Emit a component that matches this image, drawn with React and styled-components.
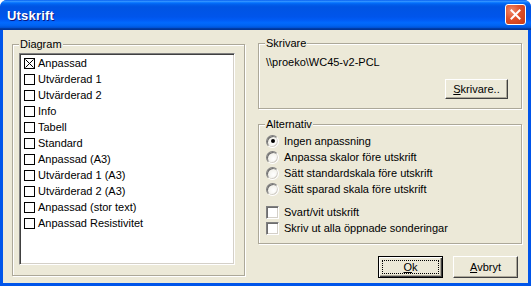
import React from "react";
import styled, { createGlobalStyle } from "styled-components";

const GlobalStyle = createGlobalStyle`
  html, body {
    margin: 0;
    padding: 0;
    background: #ffffff;
    overflow: hidden;
  }
  body {
    font-family: "Liberation Sans", Arial, sans-serif;
    font-size: 11px;
    color: #000;
  }
`;

const Window = styled.div`
  width: 531px;
  height: 286px;
  display: flex;
  flex-direction: column;
  box-sizing: border-box;
  background: #0055ea;
  border-radius: 7px 7px 0 0;
  overflow: hidden;
`;

const TitleBar = styled.div`
  height: 30px;
  flex: none;
  display: flex;
  align-items: center;
  justify-content: space-between;
  padding: 0 5px 0 7px;
  background: linear-gradient(
    to bottom,
    #0058ee 0%,
    #3593ff 4%,
    #288eff 6%,
    #127dff 8%,
    #036ffc 10%,
    #0262ee 14%,
    #0057e5 20%,
    #0054e3 24%,
    #0055eb 56%,
    #005bf5 66%,
    #026afe 76%,
    #0062ef 86%,
    #0052d6 92%,
    #0040ab 94%,
    #003092 100%
  );
`;

const Title = styled.span`
  font-family: "Liberation Sans", Arial, sans-serif;
  font-weight: bold;
  font-size: 13px;
  color: #fff;
  text-shadow: 1px 1px 0 #0a1883;
  letter-spacing: 0.2px;
`;

const CloseButton = styled.div`
  width: 21px;
  height: 21px;
  box-sizing: border-box;
  border: 1px solid #fff;
  border-radius: 3px;
  background: radial-gradient(circle at 30% 30%, #f08a6c 0%, #e0502a 45%, #c63a14 100%);
  display: flex;
  align-items: center;
  justify-content: center;
  margin-top: -1px;
`;

const Body = styled.div`
  flex: 1;
  margin: 0 3px 3px 3px;
  background: #ece9d8;
  display: flex;
  gap: 13px;
  padding: 14px 6px 0 9px;
  box-sizing: border-box;
`;

const Group = styled.div`
  position: relative;
  box-sizing: border-box;
  width: ${(p) => p.$width}px;
  height: ${(p) => p.$height}px;
  margin-top: ${(p) => p.$top || 0}px;
  border: 1px solid #aca899;
  box-shadow: inset 1px 1px 0 #fff, 1px 1px 0 #fff;
  display: flex;
  flex-direction: column;
  padding: ${(p) => p.$pad || "0"};
`;

const Legend = styled.span`
  position: absolute;
  top: -7px;
  left: 6px;
  padding: 0 1px;
  line-height: 13px;
  background: #ece9d8;
`;

const ListBox = styled.div`
  flex: 1;
  background: #fff;
  border-style: solid;
  border-width: 1px;
  border-color: #808080 #fff #fff #808080;
  box-shadow: inset 1px 1px 0 #404040, inset -1px -1px 0 #d4d0c8;
  padding: 1px 2px;
  display: flex;
  flex-direction: column;
`;

const ListRow = styled.div`
  height: 16px;
  display: flex;
  align-items: center;
  gap: 3px;
  padding-left: 2px;
  white-space: nowrap;
`;

const FlatCheck = styled.span`
  width: 11px;
  height: 11px;
  box-sizing: border-box;
  border: 1px solid #000;
  background: #fff;
  display: inline-flex;
  flex: none;
`;

const RightColumn = styled.div`
  display: flex;
  flex-direction: column;
  width: 264px;
`;

const PrinterName = styled.div`
  line-height: 13px;
`;

const Button = styled.div`
  box-sizing: border-box;
  width: ${(p) => p.$width || 65}px;
  height: ${(p) => p.$height || 22}px;
  display: flex;
  align-items: center;
  justify-content: center;
  background: #ece9d8;
  position: relative;
  border-style: solid;
  border-width: 1px;
  border-color: ${(p) => (p.$primary ? "#000" : "#fff #404040 #404040 #fff")};
  box-shadow: ${(p) =>
    p.$primary
      ? "inset 1px 1px 0 #fff, inset -1px -1px 0 #404040, inset -2px -2px 0 #aca899"
      : "inset -1px -1px 0 #aca899"};
  u {
    text-decoration: underline;
  }
`;

const FocusRing = styled.span`
  position: absolute;
  inset: 3px;
  border: 1px dotted #000;
`;

const OptionRow = styled.div`
  height: 16px;
  display: flex;
  align-items: center;
  gap: 5px;
  padding-left: 7px;
  white-space: nowrap;
`;

const Radio = styled.span`
  width: 13px;
  height: 13px;
  box-sizing: border-box;
  border-radius: 50%;
  border-style: solid;
  border-width: 1px;
  border-color: #808080 #fff #fff #808080;
  box-shadow: inset 1px 1px 0 #6d6d6d, inset -1px -1px 0 #d4d0c8;
  background: radial-gradient(circle at 60% 60%, #ffffff 0%, #f3f2ec 55%, #dcd9cc 100%);
  display: inline-flex;
  align-items: center;
  justify-content: center;
  flex: none;
  &::after {
    content: "";
    width: 4px;
    height: 4px;
    border-radius: 50%;
    background: ${(p) => (p.$checked ? "#000" : "transparent")};
  }
`;

const Check = styled.span`
  width: 13px;
  height: 13px;
  box-sizing: border-box;
  border-style: solid;
  border-width: 1px;
  border-color: #808080 #fff #fff #808080;
  box-shadow: inset 1px 1px 0 #6d6d6d, inset -1px -1px 0 #d4d0c8;
  background: #fff;
  flex: none;
`;

const Spacer = styled.div`
  height: ${(p) => p.$h}px;
  flex: none;
`;

const ButtonRow = styled.div`
  display: flex;
  justify-content: flex-end;
  gap: 10px;
  margin-top: 12px;
  margin-right: 4px;
`;

const diagrams = [
  "Anpassad",
  "Utvärderad 1",
  "Utvärderad 2",
  "Info",
  "Tabell",
  "Standard",
  "Anpassad (A3)",
  "Utvärderad 1 (A3)",
  "Utvärderad 2 (A3)",
  "Anpassad (stor text)",
  "Anpassad Resistivitet",
];

const radios = [
  "Ingen anpassning",
  "Anpassa skalor före utskrift",
  "Sätt standardskala före utskrift",
  "Sätt sparad skala före utskrift",
];

const checks = ["Svart/vit utskrift", "Skriv ut alla öppnade sonderingar"];

const CrossMark = () => (
  <svg width="9" height="9" viewBox="0 0 9 9">
    <path d="M0.5 0.5 L8.5 8.5 M8.5 0.5 L0.5 8.5" stroke="#000" strokeWidth="1" />
  </svg>
);

const App = () => (
  <>
    <GlobalStyle />
    <Window>
      <TitleBar>
        <Title>Utskrift</Title>
        <CloseButton>
          <svg width="11" height="11" viewBox="0 0 11 11">
            <path d="M1.5 1.5 L9.5 9.5 M9.5 1.5 L1.5 9.5" stroke="#fff" strokeWidth="2" strokeLinecap="square" />
          </svg>
        </CloseButton>
      </TitleBar>
      <Body>
        <Group $width={235} $height={232} $pad="8px 9px 10px 6px">
          <Legend>Diagram</Legend>
          <ListBox>
            {diagrams.map((d, i) => (
              <ListRow key={d}>
                <FlatCheck>{i === 0 && <CrossMark />}</FlatCheck>
                {d}
              </ListRow>
            ))}
          </ListBox>
        </Group>
        <RightColumn>
          <Group $width={264} $height={66} $top={-1} $pad="12px 13px 8px 7px">
            <Legend>Skrivare</Legend>
            <PrinterName>\\proeko\WC45-v2-PCL</PrinterName>
            <Spacer $h={10} />
            <Button $width={63} $height={20} style={{ alignSelf: "flex-end" }}>
              <span>
                <u>S</u>krivare..
              </span>
            </Button>
          </Group>
          <Group $width={264} $height={120} $top={15} $pad="8px 0 0 0">
            <Legend>Alternativ</Legend>
            {radios.map((r, i) => (
              <OptionRow key={r}>
                <Radio $checked={i === 0} />
                {r}
              </OptionRow>
            ))}
            <Spacer $h={7} />
            {checks.map((c) => (
              <OptionRow key={c}>
                <Check />
                {c}
              </OptionRow>
            ))}
          </Group>
          <ButtonRow>
            <Button $primary>
              <FocusRing />
              <span>
                <u>O</u>k
              </span>
            </Button>
            <Button>
              <span>
                <u>A</u>vbryt
              </span>
            </Button>
          </ButtonRow>
        </RightColumn>
      </Body>
    </Window>
  </>
);

export default App;
